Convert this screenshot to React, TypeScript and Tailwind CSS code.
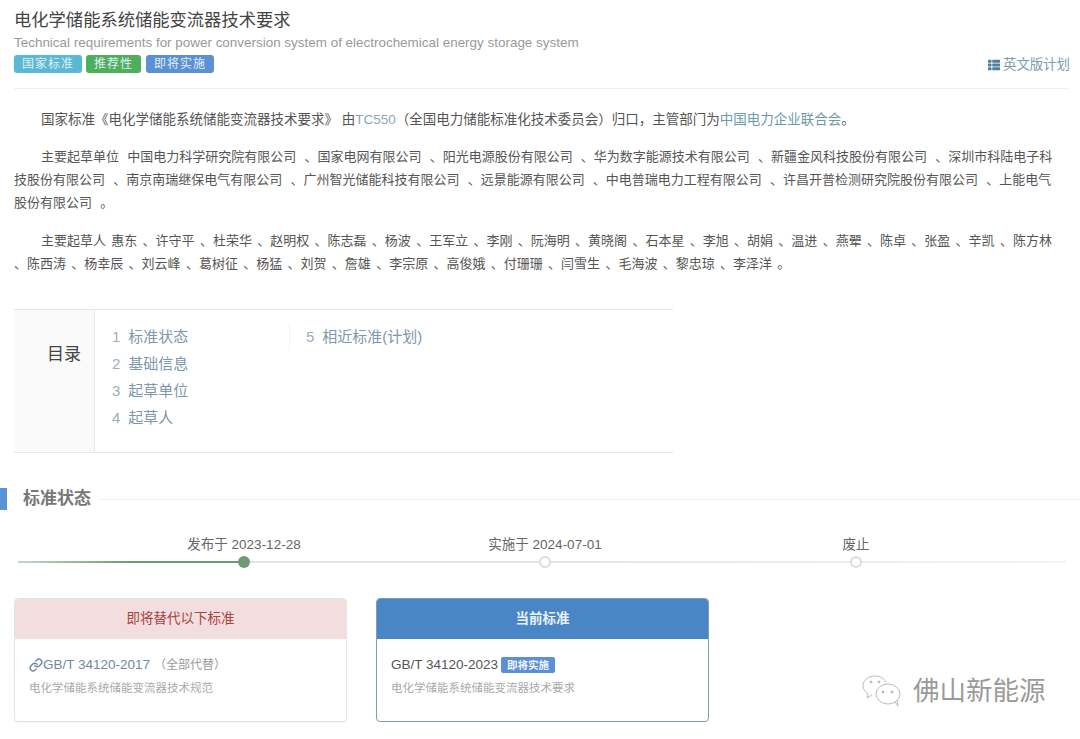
import { Link } from "lucide-react";
import { FaThList } from "react-icons/fa";

const font = "font-['Liberation_Sans','Noto_Sans_CJK_SC',sans-serif]";

function Tag({ className, children }: { className: string; children: string }) {
  return (
    <span className={`h-[18px] rounded-[3px] px-[8px] text-[12px] leading-[18px] tracking-[1px] text-[#dff0f6] ${className}`}>
      {children}
    </span>
  );
}

function Milestone({ label, filled }: { label: string; filled?: boolean }) {
  return (
    <div className="flex w-[100px] flex-col items-center">
      <span className="whitespace-nowrap text-[13.5px] leading-[18px] text-[#666]">{label}</span>
      <span
        className={
          filled
            ? "mt-[2px] h-[12px] w-[12px] rounded-full bg-[#6e9c72]"
            : "mt-[2px] h-[12px] w-[12px] rounded-full border-2 border-[#dcdcdc] bg-white"
        }
      />
    </div>
  );
}

export default function App() {
  return (
    <div className={`h-[739px] w-[1080px] overflow-hidden bg-white text-[#333] ${font}`}>
      {/* header */}
      <div className="mx-[14px] mr-[10px] border-b border-[#f0f0f0] pt-[9px] pb-[15px]">
        <h1 className="text-[17.3px] leading-[22px] text-[#444]">电化学储能系统储能变流器技术要求</h1>
        <div className="flex items-end justify-between">
          <div>
            <p className="mt-[2px] text-[13.45px] leading-[20px] text-[#999]">
              Technical requirements for power conversion system of electrochemical energy storage system
            </p>
            <div className="mt-[2px] flex gap-[4px]">
              <Tag className="bg-[#5bb8d4]">国家标准</Tag>
              <Tag className="bg-[#4fae5c]">推荐性</Tag>
              <Tag className="ml-[1px] bg-[#5d8fd6]">即将实施</Tag>
            </div>
          </div>
          <div className="-mb-[1px] flex items-center gap-[3px] text-[13.4px] leading-[18px] text-[#7a9cb0]">
            <FaThList size={12} className="text-[#4f7f9c]" />
            英文版计划
          </div>
        </div>
      </div>

      {/* intro paragraphs */}
      <div className="mx-[14px] mr-[10px] pt-[19px] text-[13px] leading-[23px] text-[#555]">
        <p className="indent-[27px] text-[13.5px]">
          国家标准《电化学储能系统储能变流器技术要求》 由<span className="text-[#8aa8b8]">TC550</span>
          （全国电力储能标准化技术委员会）归口，主管部门为<span className="text-[#6b9aaa]">中国电力企业联合会</span>。
        </p>
        <p className="mt-[14px] indent-[27px] pr-[8px] [word-spacing:4.6px]">
          主要起草单位 中国电力科学研究院有限公司 、国家电网有限公司 、阳光电源股份有限公司 、华为数字能源技术有限公司 、新疆金风科技股份有限公司 、深圳市科陆电子科技股份有限公司 、南京南瑞继保电气有限公司 、广州智光储能科技有限公司 、远景能源有限公司 、中电普瑞电力工程有限公司 、许昌开普检测研究院股份有限公司 、上能电气股份有限公司 。
        </p>
        <p className="mt-[15px] indent-[27px] [word-spacing:1.7px]">
          主要起草人 惠东 、许守平 、杜荣华 、赵明权 、陈志磊 、杨波 、王军立 、李刚 、阮海明 、黄晓阁 、石本星 、李旭 、胡娟 、温进 、燕翚 、陈卓 、张盈 、辛凯 、陈方林
          <br />
          、陈西涛 、杨幸辰 、刘云峰 、葛树征 、杨猛 、刘贺 、詹雄 、李宗原 、高俊娥 、付珊珊 、闫雪生 、毛海波 、黎忠琼 、李泽洋 。
        </p>
      </div>

      {/* toc */}
      <div className="ml-[14px] mt-[34px] flex h-[144px] w-[659px] border-y border-[#e6e6e6]">
        <div className="w-[81px] border-r border-[#e8e8e8] bg-[#fafafa] pt-[34px] pr-[13px] text-right text-[17px] leading-[22px] text-[#444]">
          目录
        </div>
        <div className="flex pt-[13px] pl-[17px] text-[15px] leading-[27px] text-[#7d97ab]">
          <ul className="w-[177px]">
            {["标准状态", "基础信息", "起草单位", "起草人"].map((t, i) => (
              <li key={t}>
                <span className="mr-[8px] text-[#9bb0c0]">{i + 1}</span>
                {t}
              </li>
            ))}
          </ul>
          <ul>
            <li className="border-l border-[#f4f4f4] pl-[16px]">
              <span className="mr-[8px] text-[#9bb0c0]">5</span>相近标准(计划)
            </li>
          </ul>
        </div>
      </div>

      {/* status */}
      <div className="mt-[35px] flex items-center">
        <div className="h-[22px] w-[7px] bg-[#5b93d8]" />
        <h2 className="ml-[16px] text-[17px] font-bold leading-[22px] text-[#777]">标准状态</h2>
        <div className="ml-[8px] h-px flex-1 bg-[#eeeeee]" />
      </div>

      <div className="relative mx-[18px] mt-[26px] h-[36px] w-[1048px]">
        <div className="absolute top-[25px] left-0 h-[2px] w-full bg-gradient-to-r from-[#e4e4e4] via-[#e4e4e4] to-[#f4f4f4]" />
        <div className="absolute top-[25px] left-0 h-[2px] w-[226px] bg-gradient-to-r from-[#c6d6c8] via-[#6e9c72] to-[#6e9c72]" />
        <div className="relative flex pl-[176px]">
          <Milestone label="发布于 2023-12-28" filled />
          <div className="ml-[201px]">
            <Milestone label="实施于 2024-07-01" />
          </div>
          <div className="ml-[211px]">
            <Milestone label="废止" />
          </div>
        </div>
      </div>

      {/* cards */}
      <div className="relative mt-[26px] flex gap-[29px] pl-[14px]">
        <div className="h-[124px] w-[333px] overflow-hidden rounded-[4px] border border-[#e4e4e4] shadow-[0_1px_1px_rgba(0,0,0,0.05)]">
          <div className="h-[40px] bg-[#f2dede] text-center text-[13.5px] leading-[40px] text-[#a94442]">即将替代以下标准</div>
          <div className="px-[14px] pt-[17px]">
            <div className="flex items-center text-[13.5px] leading-[18px] text-[#6b8aa5]">
              <Link size={14} strokeWidth={2.5} className="text-[#6b8aa5]" />
              GB/T 34120-2017
              <span className="ml-[4px] text-[12px] text-[#999]">（全部代替）</span>
            </div>
            <p className="mt-[6px] text-[11.5px] leading-[16px] text-[#aaa]">电化学储能系统储能变流器技术规范</p>
          </div>
        </div>
        <div className="h-[124px] w-[333px] overflow-hidden rounded-[4px] border border-[#7f9fa8]">
          <div className="h-[40px] bg-[#4a86c5] text-center text-[13.5px] font-bold leading-[40px] text-[#e8f1f8]">当前标准</div>
          <div className="px-[14px] pt-[17px]">
            <div className="flex items-center text-[13.5px] leading-[18px] text-[#555]">
              GB/T 34120-2023
              <span className="ml-[3px] rounded-[2px] bg-[#5d8fd6] px-[6px] text-[10.5px] font-bold leading-[16px] text-[#eef4fb]">即将实施</span>
            </div>
            <p className="mt-[6px] text-[11.5px] leading-[16px] text-[#aaa]">电化学储能系统储能变流器技术要求</p>
          </div>
        </div>
        {/* wechat watermark */}
        <div className="absolute top-[76px] left-[862px] flex items-center gap-[7px] whitespace-nowrap text-[26.5px] leading-[34px] text-[#9a9a9a]">
          <svg width="44" height="32" viewBox="0 0 44 32" fill="none" stroke="#bbb" strokeWidth="1">
            <path d="M24 7C22 3 18 1 13 1 6 1 1 5 1 11c0 3 2 6 5 8l-1 4 5-3" />
            <ellipse cx="26" cy="19" rx="12" ry="10" />
            <path d="M33 27l3 4-1-6" />
            <circle cx="9" cy="7" r="1" fill="#aaa" />
            <circle cx="17" cy="7" r="1" fill="#aaa" />
            <circle cx="21" cy="17" r="1" fill="#aaa" />
            <circle cx="30" cy="17" r="1" fill="#aaa" />
          </svg>
          佛山新能源
        </div>
      </div>
    </div>
  );
}
